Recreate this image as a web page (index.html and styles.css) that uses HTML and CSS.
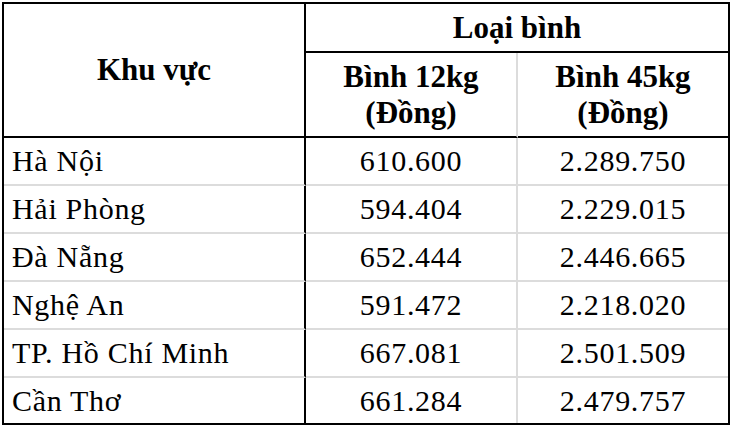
FILE: index.html
```html
<!DOCTYPE html>
<html lang="vi">
<head>
<meta charset="utf-8">
<title>Giá gas</title>
<link rel="stylesheet" href="styles.css">
</head>
<body>
<table class="price-table">
  <colgroup>
    <col class="c1">
    <col class="c2">
    <col class="c3">
  </colgroup>
  <thead>
    <tr class="hrow1">
      <th class="region-head" rowspan="2">Khu vực</th>
      <th class="group-head" colspan="2">Loại bình</th>
    </tr>
    <tr class="hrow2">
      <th class="sub sub1">Bình 12kg<br>(Đồng)</th>
      <th class="sub sub2">Bình 45kg<br>(Đồng)</th>
    </tr>
  </thead>
  <tbody>
    <tr><td class="region">Hà Nội</td><td class="num n1">610.600</td><td class="num n2">2.289.750</td></tr>
    <tr><td class="region">Hải Phòng</td><td class="num n1">594.404</td><td class="num n2">2.229.015</td></tr>
    <tr><td class="region">Đà Nẵng</td><td class="num n1">652.444</td><td class="num n2">2.446.665</td></tr>
    <tr><td class="region">Nghệ An</td><td class="num n1">591.472</td><td class="num n2">2.218.020</td></tr>
    <tr><td class="region">TP. Hồ Chí Minh</td><td class="num n1">667.081</td><td class="num n2">2.501.509</td></tr>
    <tr class="last"><td class="region">Cần Thơ</td><td class="num n1">661.284</td><td class="num n2">2.479.757</td></tr>
  </tbody>
</table>
</body>
</html>
```
FILE: styles.css
```css
html, body {
  background: #fff;
}
body {
  margin: 2px 0 0 2px;
  font-family: "Liberation Serif", "Times New Roman", Times, serif;
  color: #000;
}
.price-table {
  box-sizing: border-box;
  width: 728px;
  border: 2px solid #000;
  border-collapse: separate;
  border-spacing: 0;
  table-layout: fixed;
}
.c1 { width: 302px; }
.c2 { width: 212px; }
.c3 { width: 210px; }

.price-table th,
.price-table td {
  box-sizing: border-box;
  padding: 0;
  vertical-align: middle;
}
.price-table th {
  font-size: 31px;
  font-weight: bold;
  text-align: center;
  line-height: 36px;
  border-bottom: 2px solid #000;
}
.price-table .region-head {
  border-right: 2px solid #000;
}
.price-table .group-head {
  height: 49px;
}
.price-table .sub {
  height: 85px;
}
.price-table .sub1 {
  border-right: 2px solid #dcdcdc;
}

.price-table td {
  font-size: 30px;
  letter-spacing: 0.7px;
  height: 48px;
  border-bottom: 2px solid #dcdcdc;
}
.price-table tr.last td {
  height: 45px;
  border-bottom: 0;
}
.price-table td.region {
  padding-left: 8px;
  text-align: left;
  border-right: 2px solid #000;
}
.price-table td.num {
  text-align: center;
}
.price-table td.n1 {
  border-right: 2px solid #dcdcdc;
}
```
